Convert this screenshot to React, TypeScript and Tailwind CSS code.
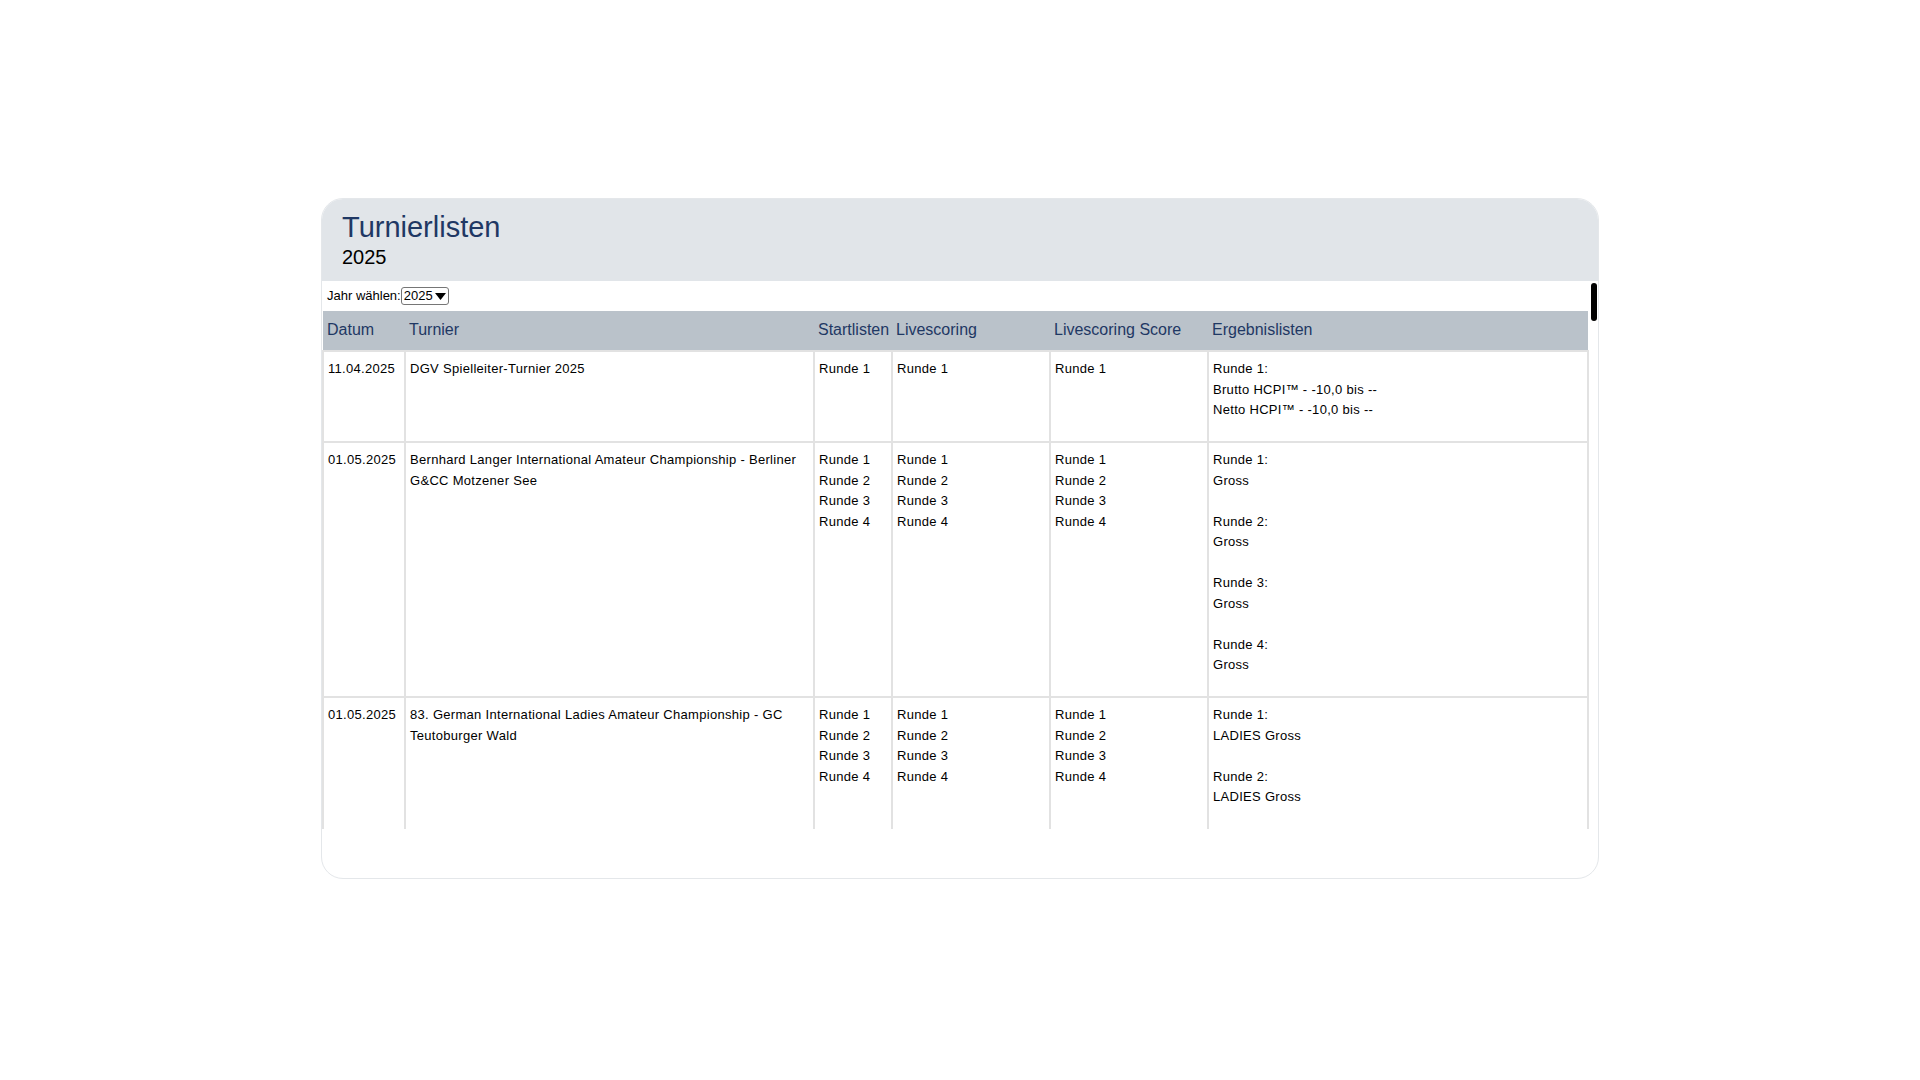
const rows = [
  {
    d: '11.04.2025',
    t: 'DGV Spielleiter-Turnier 2025',
    s: ['Runde 1'],
    l: ['Runde 1'],
    ls: ['Runde 1'],
    e: [['Runde 1:', 'Brutto HCPI™ - -10,0 bis --', 'Netto HCPI™ - -10,0 bis --']],
    h: 'h-[91px]',
  },
  {
    d: '01.05.2025',
    t: 'Bernhard Langer International Amateur Championship - Berliner G&CC Motzener See',
    s: ['Runde 1', 'Runde 2', 'Runde 3', 'Runde 4'],
    l: ['Runde 1', 'Runde 2', 'Runde 3', 'Runde 4'],
    ls: ['Runde 1', 'Runde 2', 'Runde 3', 'Runde 4'],
    e: [['Runde 1:', 'Gross'], ['Runde 2:', 'Gross'], ['Runde 3:', 'Gross'], ['Runde 4:', 'Gross']],
    h: 'h-[255px]',
  },
  {
    d: '01.05.2025',
    t: '83. German International Ladies Amateur Championship - GC Teutoburger Wald',
    s: ['Runde 1', 'Runde 2', 'Runde 3', 'Runde 4'],
    l: ['Runde 1', 'Runde 2', 'Runde 3', 'Runde 4'],
    ls: ['Runde 1', 'Runde 2', 'Runde 3', 'Runde 4'],
    e: [['Runde 1:', 'LADIES Gross'], ['Runde 2:', 'LADIES Gross'], ['Runde 3:', 'LADIES Gross'], ['Runde 4:', 'LADIES Gross']],
    h: 'h-[255px]',
  },
];

const cell = 'align-top border-2 border-[#e2e2e2] px-[4px] pt-[7px] pb-[4px]';

export default function App() {
  return (
    <div
      className="w-[1920px] h-[1080px] bg-white pt-[198px] pl-[321px]"
      style={{ fontFamily: '"Liberation Sans", Arial, sans-serif' }}
    >
      <div className="w-[1278px] h-[681px] rounded-[22px] border border-[#e4e7ea] overflow-hidden flex flex-col">
        <div className="bg-[#e1e5e9] h-[82px] pl-[20px] pt-[11px]">
          <div className="text-[29px] leading-[34px] text-[#1f3864]">Turnierlisten</div>
          <div className="text-[20px] leading-[26px] text-black">2025</div>
        </div>
        <div className="h-[548px] overflow-hidden flex">
          <div className="w-[1267px]">
            <div className="h-[30px] flex items-center pl-[5px] text-[13px] text-black">
              Jahr wählen:
              <span className="border border-[#767676] rounded-[3px] px-[2px] leading-[16px] flex items-center gap-[2px]">
                2025
                <svg width="11" height="7" viewBox="0 0 11 7"><path d="M0 0h11L5.5 7z" fill="#000" /></svg>
              </span>
            </div>
            <table className="w-[1267px] border-collapse table-fixed text-[13px] leading-[20.5px] text-black tracking-[0.3px]">
              <colgroup>
                <col className="w-[82px]" />
                <col className="w-[409px]" />
                <col className="w-[78px]" />
                <col className="w-[158px]" />
                <col className="w-[158px]" />
                <col />
              </colgroup>
              <thead>
                <tr className="bg-[#bac2ca] h-[40px] text-[16px] text-[#1f3864] text-left">
                  {['Datum', 'Turnier', 'Startlisten', 'Livescoring', 'Livescoring Score', 'Ergebnislisten'].map((h) => (
                    <th key={h} className="font-normal px-[4px] tracking-normal whitespace-nowrap">{h}</th>
                  ))}
                </tr>
              </thead>
              <tbody>
                {rows.map((r, i) => (
                  <tr key={i} className={r.h}>
                    <td className={cell}>{r.d}</td>
                    <td className={cell}>{r.t}</td>
                    <td className={cell}>{r.s.map((x) => <div key={x}>{x}</div>)}</td>
                    <td className={cell}>{r.l.map((x) => <div key={x}>{x}</div>)}</td>
                    <td className={cell}>{r.ls.map((x) => <div key={x}>{x}</div>)}</td>
                    <td className={cell}>
                      {r.e.map((g, j) => (
                        <div key={j} className="mb-[20.5px] last:mb-0">
                          {g.map((x) => <div key={x}>{x}</div>)}
                        </div>
                      ))}
                    </td>
                  </tr>
                ))}
              </tbody>
            </table>
          </div>
          <div className="w-[11px] pt-[2px] flex justify-center">
            <div className="w-[6px] h-[38px] bg-black rounded-[3px]" />
          </div>
        </div>
      </div>
    </div>
  );
}
